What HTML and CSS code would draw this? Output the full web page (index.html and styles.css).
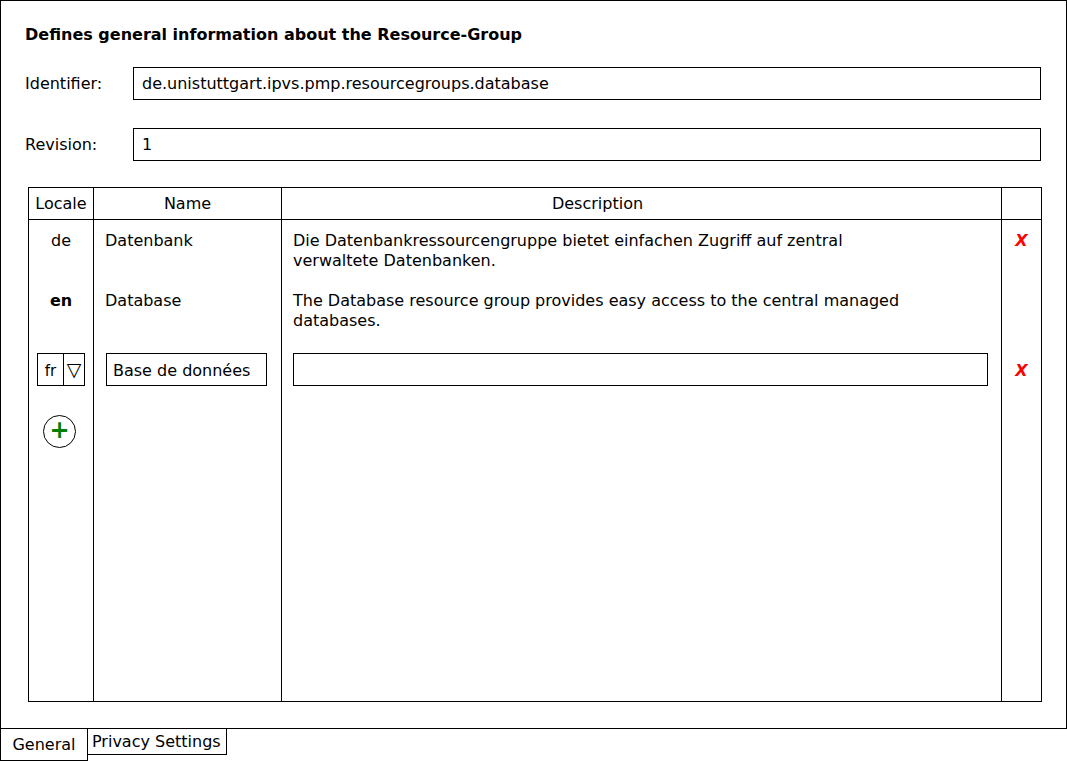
FILE: index.html
```html
<!DOCTYPE html>
<html>
<head>
<meta charset="utf-8">
<link rel="stylesheet" href="styles.css">
</head>
<body>
<div class="panel">
  <h1 class="title">Defines general information about the Resource-Group</h1>
  <div class="field">
    <label class="label">Identifier:</label>
    <div class="input">de.unistuttgart.ipvs.pmp.resourcegroups.database</div>
  </div>
  <div class="field">
    <label class="label">Revision:</label>
    <div class="input">1</div>
  </div>
  <table class="grid">
    <thead>
      <tr>
        <th class="c-loc">Locale</th>
        <th class="c-name">Name</th>
        <th class="c-desc">Description</th>
        <th class="c-x"></th>
      </tr>
    </thead>
    <tbody>
      <tr class="r1">
        <td class="c-loc">de</td>
        <td class="c-name">Datenbank</td>
        <td class="c-desc"><div class="desc">Die Datenbankressourcengruppe bietet einfachen Zugriff auf zentral verwaltete Datenbanken.</div></td>
        <td class="c-x"><span class="del">X</span></td>
      </tr>
      <tr class="r2">
        <td class="c-loc"><b>en</b></td>
        <td class="c-name">Database</td>
        <td class="c-desc"><div class="desc">The Database resource group provides easy access to the central managed databases.</div></td>
        <td class="c-x"></td>
      </tr>
      <tr class="r3">
        <td class="c-loc"><div class="select"><span class="sel-val">fr</span><span class="sel-btn">▽</span></div></td>
        <td class="c-name"><div class="box name-box">Base de données</div></td>
        <td class="c-desc"><div class="box desc-box"></div></td>
        <td class="c-x"><span class="del">X</span></td>
      </tr>
      <tr class="r4">
        <td class="c-loc"><div class="add">+</div></td>
        <td class="c-name"></td>
        <td class="c-desc"></td>
        <td class="c-x"></td>
      </tr>
      <tr class="filler">
        <td></td><td></td><td></td><td></td>
      </tr>
    </tbody>
  </table>
</div>
<div class="tabs">
  <div class="tab active">General</div>
  <div class="tab">Privacy Settings</div>
</div>
</body>
</html>
```
FILE: styles.css
```css
* { box-sizing: border-box; }
html, body { margin: 0; padding: 0; background: #fff; }
body {
  font-family: "DejaVu Sans", sans-serif;
  font-size: 16px;
  line-height: 20px;
  color: #000;
  width: 1067px;
  height: 761px;
  overflow: hidden;
}
.panel {
  width: 1067px;
  height: 729px;
  border: 1px solid #000;
  padding: 24px 25px 0 24px;
}
.title {
  margin: 0 0 22px 0;
  font-size: 16px;
  line-height: 20px;
  font-weight: bold;
}
.field {
  display: flex;
  align-items: center;
  margin-bottom: 28px;
}
.field + .field { margin-bottom: 26px; }
.label { width: 108px; flex: none; }
.input {
  flex: 1;
  height: 33px;
  border: 1px solid #000;
  padding: 5px 8px 0 8px;
  line-height: 21px;
}
.grid {
  margin-left: 3px;
  width: 1013px;
  height: 515px;
  border-collapse: collapse;
  table-layout: fixed;
}
.grid th {
  height: 32px;
  border: 1px solid #000;
  font-weight: normal;
  padding: 0;
  text-align: center;
}
.grid td {
  border-left: 1px solid #000;
  border-right: 1px solid #000;
  vertical-align: top;
  padding: 0 11px;
}
.grid tr.filler td { border-bottom: 1px solid #000; }
.c-loc { width: 65px; }
.grid td.c-loc { text-align: center; padding: 0; }
.c-name { width: 188px; }
.c-desc { width: 720px; }
.grid th.c-desc { padding-right: 88px; }
.c-x { width: 40px; }
.grid td.c-x { padding: 0; text-align: center; }
.r1 td { padding-top: 11px !important; padding-bottom: 20px !important; height: 71px; }
.r2 td { padding-bottom: 20px !important; height: 60px; }
.r3 td { padding-top: 2px !important; height: 34px; }
.r4 td { padding-top: 29px !important; height: 61px; }
.desc { max-width: 620px; }
.del {
  color: #ff0000;
  font-weight: bold;
  font-style: italic;
  font-size: 16px;
}
.r3 .del { display: inline-block; margin-top: 8px; }
.select {
  display: inline-flex;
  width: 48px;
  height: 33px;
  border: 1px solid #000;
}
.sel-val {
  width: 26px;
  border-right: 1px solid #000;
  padding-top: 7px;
  font-size: 15px;
  text-align: center;
}
.sel-btn {
  flex: 1;
  text-align: center;
  padding-top: 4px;
  font-size: 19px;
  line-height: 22px;
}
.box {
  height: 33px;
  border: 1px solid #000;
  padding: 7px 6px 0 6px;
}
.name-box { width: 161px; margin-left: 1px; }
.desc-box { width: 695px; }
.add {
  width: 33px;
  height: 33px;
  border: 1px solid #000;
  border-radius: 50%;
  margin: 0 0 0 14px;
  color: #008000;
  font-weight: bold;
  font-size: 24px;
  line-height: 29px;
  text-align: center;
}
.tabs {
  display: flex;
  align-items: flex-start;
}
.tab {
  border: 1px solid #000;
  margin-top: -1px;
  margin-left: -1px;
  height: 27px;
  padding: 3px 5px 0 4px;
  white-space: nowrap;
}
.tab.active {
  margin-left: 0;
  margin-top: 0;
  border-top: none;
  width: 88px;
  height: 32px;
  padding: 6px 0 0 0;
  text-align: center;
}
```
